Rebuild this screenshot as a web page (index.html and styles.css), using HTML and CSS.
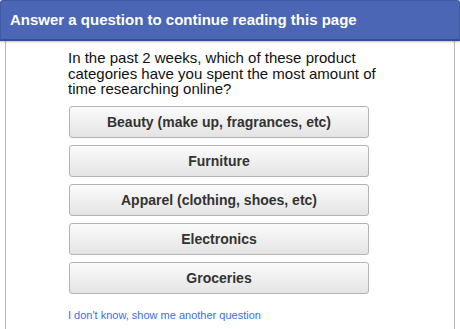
FILE: index.html
```html
<!DOCTYPE html>
<html>
<head>
<meta charset="utf-8">
<link rel="stylesheet" href="styles.css">
</head>
<body>
<div class="header">Answer a question to continue reading this page</div>
<div class="panel">
  <div class="content">
    <p class="question">In the past 2 weeks, which of these product categories have you spent the most amount of time researching online?</p>
    <div class="options">
      <button class="opt">Beauty (make up, fragrances, etc)</button>
      <button class="opt">Furniture</button>
      <button class="opt">Apparel (clothing, shoes, etc)</button>
      <button class="opt">Electronics</button>
      <button class="opt">Groceries</button>
    </div>
    <a class="skip" href="#">I don't know, show me another question</a>
  </div>
</div>
</body>
</html>
```
FILE: styles.css
```css
html, body {
  margin: 0;
  padding: 0;
  background: #fff;
  font-family: "Liberation Sans", Arial, sans-serif;
}
.header {
  position: relative;
  z-index: 1;
  height: 38px;
  line-height: 38px;
  box-sizing: content-box;
  background: #4b66b4;
  border: 1px solid #3f59a3;
  border-bottom: 2px solid #34508f;
  border-radius: 3px 3px 0 0;
  color: #fff;
  font-weight: bold;
  font-size: 15px;
  padding-left: 9px;
  box-shadow: 0 1px 2px rgba(0,0,0,0.25);
}
.panel {
  margin: 0 5px;
  border-left: 1px solid #b8b8b8;
  border-right: 1px solid #b8b8b8;
  height: 290px;
}
.content {
  padding: 9px 0 0 62px;
  width: 310px;
}
.question {
  margin: 0;
  font-size: 15px;
  line-height: 15.5px;
  color: #111;
}
.options {
  display: flex;
  flex-direction: column;
  gap: 7px;
  margin: 9px 0 0 1px;
}
.opt {
  width: 300px;
  height: 32px;
  border: 1px solid #b3b3b3;
  border-radius: 3px;
  background: linear-gradient(#fbfbfb, #e4e4e4);
  font-family: "Liberation Sans", Arial, sans-serif;
  font-weight: bold;
  font-size: 14px;
  color: #333;
  padding: 0;
}
.skip {
  display: block;
  margin-top: 15px;
  font-size: 11px;
  color: #3d6fe0;
  text-decoration: none;
}
```
